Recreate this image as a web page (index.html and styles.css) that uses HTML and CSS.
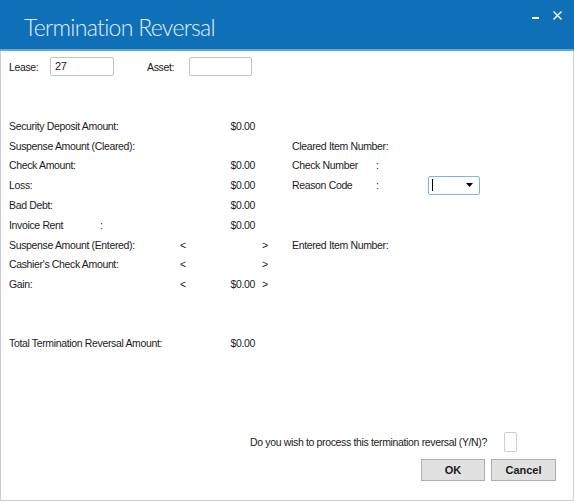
FILE: index.html
```html
<!DOCTYPE html>
<html>
<head>
<meta charset="utf-8">
<link rel="stylesheet" href="styles.css">
</head>
<body>
<div class="window">
  <div class="titlebar">
    <div class="title">Termination Reversal</div>
    <div class="controls">
      <span class="min"></span>
      <svg class="close" width="9" height="9" viewBox="0 0 9 9"><path d="M0.5 0.5L8.5 8.5M8.5 0.5L0.5 8.5" stroke="#ffffff" stroke-width="1.4"/></svg>
    </div>
  </div>
  <div class="content">
    <div class="toprow">
      <span class="lbl lease-lbl">Lease:</span>
      <div class="input lease-in">27</div>
      <span class="lbl asset-lbl">Asset:</span>
      <div class="input asset-in"></div>
    </div>
    <div class="main">
      <div class="left">
        <div class="lcell">Security Deposit Amount:</div><div></div><div class="val">$0.00</div><div></div>
        <div class="lcell">Suspense Amount (Cleared):</div><div></div><div class="val"></div><div></div>
        <div class="lcell">Check Amount:</div><div></div><div class="val">$0.00</div><div></div>
        <div class="lcell">Loss:</div><div></div><div class="val">$0.00</div><div></div>
        <div class="lcell">Bad Debt:</div><div></div><div class="val">$0.00</div><div></div>
        <div class="lcell"><span class="inv">Invoice Rent</span>:</div><div></div><div class="val">$0.00</div><div></div>
        <div class="lcell">Suspense Amount (Entered):</div><div class="lt">&lt;</div><div class="val"></div><div class="gt">&gt;</div>
        <div class="lcell">Cashier's Check Amount:</div><div class="lt">&lt;</div><div class="val"></div><div class="gt">&gt;</div>
        <div class="lcell">Gain:</div><div class="lt">&lt;</div><div class="val">$0.00</div><div class="gt">&gt;</div>
      </div>
      <div class="right">
        <div class="rrow"></div>
        <div class="rrow">Cleared Item Number:</div>
        <div class="rrow"><span class="rl">Check Number</span>:</div>
        <div class="rrow"><span class="rl">Reason Code</span><span class="rc">:</span><div class="combo"><span class="caret"></span><svg class="arrow" width="7" height="4" viewBox="0 0 7 4"><path d="M0 0H7L3.5 4Z" fill="#000"/></svg></div></div>
        <div class="rrow"></div>
        <div class="rrow"></div>
        <div class="rrow">Entered Item Number:</div>
      </div>
    </div>
    <div class="total">
      <div class="lcell">Total Termination Reversal Amount:</div><div></div><div class="val">$0.00</div>
    </div>
    <div class="question">
      <span class="qtext">Do you wish to process this termination reversal (Y/N)?</span>
      <div class="yn"></div>
    </div>
    <div class="buttons">
      <button class="btn">OK</button>
      <button class="btn">Cancel</button>
    </div>
  </div>
</div>
</body>
</html>
```
FILE: styles.css
```css
* { box-sizing: border-box; }
html, body { margin: 0; padding: 0; background: #ffffff; }
body { font-family: "Liberation Sans", Arial, sans-serif; font-size: 10.5px; letter-spacing: -0.35px; color: #1a1a1a; }
.window {
  width: 574px; height: 501px;
  border-left: 1px solid #cdcdcd; border-right: 1px solid #cdcdcd; border-bottom: 1px solid #cdcdcd;
  display: flex; flex-direction: column;
}
.titlebar {
  height: 51px; background: #0f70b8; border-bottom: 2px solid #66a9dd;
  display: flex; justify-content: space-between; margin: 0 -1px;
}
.title {
  font-family: Lato, "Open Sans", sans-serif; font-weight: 300;
  font-size: 23px; color: #e4effa; padding: 13px 0 0 24px; letter-spacing: -0.7px;
}
.controls { display: flex; align-items: flex-start; gap: 14px; padding: 11px 12px 0 0; }
.min { display: block; width: 7px; height: 2px; background: #ffffff; margin-top: 6px; }
.content { padding: 6px 0 0 8px; flex: 1; display: flex; flex-direction: column; }
.toprow { display: flex; align-items: center; height: 19px; }
.lease-lbl { width: 41px; }
.input { height: 19px; border: 1px solid #c4c4c4; border-radius: 2px; padding: 2px 0 0 4px; font-size: 11px; }
.lease-in { width: 64px; }
.asset-lbl { margin-left: 33px; width: 42px; }
.asset-in { width: 63px; }
.main { display: flex; margin-top: 40px; }
.left {
  display: grid; width: 283px;
  grid-template-columns: 171px 12px 63px 37px;
  grid-auto-rows: 19.8px; align-items: center;
}
.lcell { white-space: nowrap; }
.val { text-align: right; }
.gt { padding-left: 7px; }
.inv { display: inline-block; width: 91px; }
.right { display: flex; flex-direction: column; }
.rrow { height: 19.8px; display: flex; align-items: center; white-space: nowrap; }
.rl { display: inline-block; width: 84px; }
.rc { display: inline-block; width: 52px; }
.combo {
  width: 52px; height: 19px; border: 1px solid #7eb4ea; border-radius: 2px;
  display: flex; align-items: center; justify-content: space-between; padding: 0 6px 0 3px;
}
.caret { width: 1px; height: 12px; background: #000; }
.total {
  display: grid; grid-template-columns: 171px 12px 63px; align-items: center;
  height: 20px; margin-top: 39px;
}
.question { display: flex; align-items: center; justify-content: flex-end; margin-top: 79px; padding-right: 56px; }
.qtext { white-space: nowrap; }
.yn { width: 13px; height: 20px; border: 1px solid #cfcfcf; border-radius: 2px; margin-left: 17px; flex: none; }
.buttons { display: flex; justify-content: flex-end; gap: 6px; margin-top: 7px; padding-right: 17px; }
.btn {
  width: 65px; height: 22px; background: #e1e1e1; border: 1px solid #adadad; border-radius: 0;
  font-family: "Liberation Sans", Arial, sans-serif; font-size: 11px; font-weight: bold; color: #1a1a1a; padding: 0;
}
.btn:first-child { width: 64px; }
```
